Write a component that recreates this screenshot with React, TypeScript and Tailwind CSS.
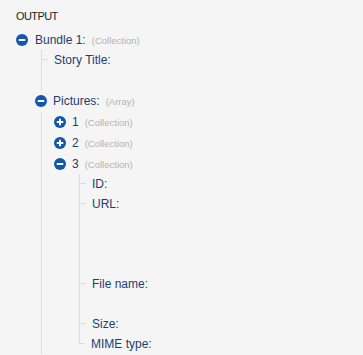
import React from 'react';

type Field = {
  label: string;
  kind?: string;
  open?: boolean;
  // extra empty space under a field where its (empty) value sits
  pad?: string;
  // list continues below what is shown
  more?: boolean;
  children?: Field[];
};

const TREE: Field = {
  label: 'Bundle 1:',
  kind: '(Collection)',
  open: true,
  more: true,
  children: [
    { label: 'Story Title:', pad: 'pb-5' },
    {
      label: 'Pictures:',
      kind: '(Array)',
      open: true,
      children: [
        { label: '1', kind: '(Collection)', children: [] },
        { label: '2', kind: '(Collection)', children: [] },
        {
          label: '3',
          kind: '(Collection)',
          open: true,
          children: [
            { label: 'ID:' },
            { label: 'URL:', pad: 'pb-[60px]' },
            { label: 'File name:', pad: 'pb-5' },
            { label: 'Size:' },
            { label: 'MIME type:' },
          ],
        },
      ],
    },
  ],
};

const Toggle = ({ open }: { open?: boolean }) => (
  <span className="flex h-3 w-3 shrink-0 rounded-full ring-[5px] ring-[#f5f5f5]">
    <svg width="12" height="12" viewBox="0 0 12 12">
      <circle cx="6" cy="6" r="6" fill="#0f58ae" />
      <rect x="2.75" y="5" width="6.5" height="2" fill="#fff" />
      {!open && <rect x="5" y="2.75" width="2" height="6.5" fill="#fff" />}
    </svg>
  </span>
);

const Label = ({ field }: { field: Field }) => (
  <span className="whitespace-nowrap text-[12px] leading-none text-[#1e3d6f]">
    {field.label}
    {field.kind && <span className="ml-[6px] text-[9.5px] text-[#b3b3b3]">{field.kind}</span>}
  </span>
);

const Children = ({ field }: { field: Field }) => (
  <div className="ml-[18px] flex flex-col">
    {field.children!.map((child, i) => {
      const last = i === field.children!.length - 1 && !field.more;
      const line = last ? 'border-transparent' : 'border-[#dcdcdc]';

      if (child.children) {
        return (
          <div key={child.label} className={`flex flex-col border-l ${line}`}>
            <div className="flex h-[21px] items-center">
              <span className="-ml-[7px] mr-[6px] flex">
                <Toggle open={child.open} />
              </span>
              <Label field={child} />
            </div>
            {child.open && <Children field={child} />}
          </div>
        );
      }

      return (
        <div key={child.label} className={`flex flex-col border-l ${line} ${child.pad ?? ''}`}>
          <div className="flex h-5 items-start">
            <div className={`h-[10px] w-[6px] shrink-0 border-b border-[#dcdcdc] ${last ? '-ml-px border-l' : ''}`} />
            <div className="flex h-5 items-center pl-[6px]">
              <Label field={child} />
            </div>
          </div>
        </div>
      );
    })}
  </div>
);

export default function App() {
  return (
    <div className="min-h-screen overflow-hidden bg-[#f5f5f5] pl-4 pt-[9px] font-['Liberation_Sans',Arial,sans-serif]">
      <div className="text-[11px] leading-[14px] tracking-[-0.6px] text-[#222]">OUTPUT</div>
      <div className="mt-[6px] flex flex-col">
        <div className="flex h-[21px] items-center">
          <span className="mr-[7px] flex">
            <Toggle open={TREE.open} />
          </span>
          <Label field={TREE} />
        </div>
        <div className="ml-[7px]">
          <Children field={TREE} />
        </div>
      </div>
    </div>
  );
}
